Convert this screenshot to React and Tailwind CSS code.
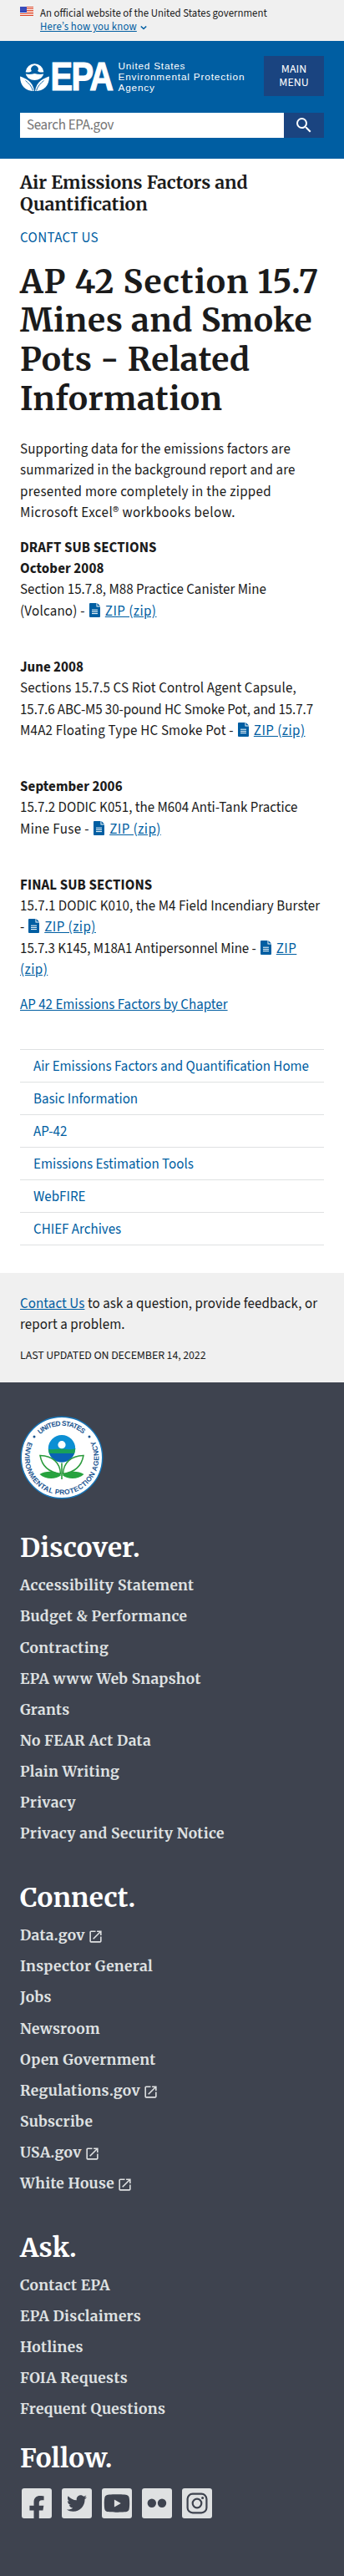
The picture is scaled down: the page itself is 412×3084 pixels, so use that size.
import React from 'react';
import { FaTwitter, FaYoutube, FaFacebookF } from 'react-icons/fa';
import { MdLaunch, MdSearch } from 'react-icons/md';

const stripes = [0, 2, 4, 6, 8, 10];

function Flag() {
  return (
    <svg className="mt-2 h-[11px] w-4 shrink-0" viewBox="0 0 16 11">
      <rect width="16" height="11" fill="#fff" />
      {stripes.map((y) => <rect key={y} y={y} width="16" height="1" fill="#db3e1f" />)}
      <rect width="8" height="7" fill="#1e33b1" />
      {[1, 3, 5].map((y) => [1, 3, 5, 7].map((x) => <circle key={`${x}-${y}`} cx={x} cy={y} r="0.45" fill="#fff" />))}
    </svg>
  );
}

function EpaLogo() {
  return (
    <svg className="mt-[5px] h-[40px] w-[270px] shrink-0 overflow-visible" viewBox="24 71 270 40" fill="#fff">
      <path d="M30.6 85.2a11 11.6 0 0 1 21.800 0c-3 .9-5.500 .3-7.300-1.200a4.300 4.300 0 1 0-7.200 0c-1.800 1.500-4.300 2.100-7.300 1.200z" />
      <circle cx="41.500" cy="81" r="2" fill="#005ea2" />
      <path d="M30.800 87.500c4 .8 7 .4 10.700-.6 3.700 1 6.700 1.400 10.700.6-1.300 4.600-5.500 7.500-10.700 7.500s-9.400-2.900-10.700-7.500z" />
      <path d="M24 90.500C30 92.500 39.500 96 41 108c-10.500 0-17-6-17-17.500z" />
      <path d="M59 90.500C53 92.500 43.500 96 42 108c10.500 0 17-6 17-17.500z" />
      <path d="M30.500 95.500c4 3 7.500 7 9 12M52.500 95.500c-4 3-7.500 7-9 12" fill="none" stroke="#005ea2" strokeWidth="0.900" />
      <g transform="translate(60.500 107.400) scale(0.830 1)">
        <text className="font-['Liberation_Sans',sans-serif] text-[48px] font-bold tracking-[-2px]" stroke="#fff" strokeWidth="1.200">EPA</text>
      </g>
      <g className="font-['Liberation_Sans',sans-serif] text-[11.8px]">
        <text x="141.500" y="82.200" textLength="80">United States</text>
        <text x="141.500" y="95" textLength="151">Environmental Protection</text>
        <text x="141.500" y="107.800" textLength="43.500">Agency</text>
      </g>
    </svg>
  );
}

function Seal() {
  return (
    <svg className="h-[100px] w-[100px]" viewBox="0 0 100 100">
      <defs>
        <path id="seal-top" d="M24.080 22.170A38 38 0 0 1 75.920 22.170" />
        <path id="seal-bottom" d="M9.900 31.200A44.300 44.300 0 1 0 90.100 31.200" />
        <clipPath id="seal-ball"><circle cx="50" cy="39.200" r="16.200" /></clipPath>
      </defs>
      <circle cx="50" cy="50" r="48.700" fill="#fff" stroke="#1675b8" strokeWidth="1.400" />
      <g className="font-['Liberation_Sans',sans-serif] text-[8.4px] font-bold" fill="#1b5591">
        <text><textPath href="#seal-top" textLength="56">UNITED STATES</textPath></text>
        <text><textPath href="#seal-bottom" textLength="179">ENVIRONMENTAL PROTECTION AGENCY</textPath></text>
      </g>
      <circle cx="17" cy="25" r="1.500" fill="#1b5591" />
      <circle cx="83" cy="25" r="1.500" fill="#1b5591" />
      <g clipPath="url(#seal-ball)">
        <rect x="33" y="22" width="34" height="34" fill="#0c8fd3" />
        <path d="M33 40c6 1 10-1 17-.5s11 1.500 17-.5v7H33z" fill="#19a05a" />
        <rect x="33" y="45" width="34" height="12" fill="#0a63b4" />
      </g>
      <circle cx="50" cy="34.700" r="4.600" fill="#fff" />
      <path d="M50 56.500V76" stroke="#2a9b3c" strokeWidth="1.600" />
      <path d="M48.500 69.500C48 56 39 48 24 47.500c2 11 9 20 24.500 22zM51.500 69.500C52 56 61 48 76 47.500c-2 11-9 20-24.500 22z" fill="#fff" stroke="#2a9b3c" strokeWidth="1.500" />
      <path d="M23.500 70c8-5 19-4 26 1-7 5.500-19 5.500-26-1zM76.500 70c-8-5-19-4-26 1 7 5.500 19 5.500 26-1z" fill="#27a23e" />
    </svg>
  );
}

function ZipLink({ wrap }) {
  return (
    <>
      <svg className="ml-[1.6px] mr-[6px] inline-block h-[17px] w-[13px] align-[-2px]" viewBox="0 0 13 17">
        <path d="M1 0h7.500v4.500H13V16a1 1 0 0 1-1 1H1a1 1 0 0 1-1-1V1a1 1 0 0 1 1-1zM9.400 0 13 3.600H9.400z" fill="#005ea2" />
        <path d="M3 8.200h7M3 10.400h7M3 12.600h7" stroke="#fff" strokeWidth="1" />
      </svg>
      <a className="tracking-[0.45px] text-[#005ea2] underline">{wrap ? <>ZIP<br />(zip)</> : 'ZIP (zip)'}</a>
    </>
  );
}

const nav = ['Air Emissions Factors and Quantification Home', 'Basic Information', 'AP-42', 'Emissions Estimation Tools', 'WebFIRE', 'CHIEF Archives'];

const discover = ['Accessibility Statement', 'Budget & Performance', 'Contracting', 'EPA www Web Snapshot', 'Grants', 'No FEAR Act Data', 'Plain Writing', 'Privacy', 'Privacy and Security Notice'];
const connect = ['Data.gov', 'Inspector General', 'Jobs', 'Newsroom', 'Open Government', 'Regulations.gov', 'Subscribe', 'USA.gov', 'White House'];
const ask = ['Contact EPA', 'EPA Disclaimers', 'Hotlines', 'FOIA Requests', 'Frequent Questions'];
const external = ['Data.gov', 'Regulations.gov', 'USA.gov', 'White House'];

function FooterMenu({ title, items }) {
  return (
    <section>
      <h2 className="text-[31.5px] leading-[40px] tracking-[0.2px] text-white">{title}</h2>
      <ul className="mt-[7px]">
        {items.map((item) => (
          <li key={item} className="flex h-[37.1px] items-center text-[17.4px] leading-[22px] tracking-[0.34px]">
            <a>{item}</a>
            {external.includes(item) && <MdLaunch className="ml-[3px] mt-[3px] h-[19px] w-[19px]" />}
          </li>
        ))}
      </ul>
    </section>
  );
}

function Tile({ children }) {
  return <span className="flex h-9 w-9 items-center justify-center overflow-hidden rounded-[3px] bg-[#dfe1e2] text-[#3e434f]">{children}</span>;
}

export default function App() {
  return (
    <div className="h-[3084px] w-[412px] overflow-hidden whitespace-nowrap bg-white font-['Source_Sans_3','Noto_Sans_CJK_JP',sans-serif] text-[16.96px] leading-[25.44px] text-[#1b1b1b]">
      <div className="flex h-[49px] gap-2 bg-[#f0f0f0] pl-6">
        <Flag />
        <div className="pt-[8px] text-[12.8px] leading-4">
          <p>An official website of the United States government</p>
          <p className="flex items-center text-[#005ea2]">
            <a className="tracking-[0.13px] underline">Here’s how you know</a>
            <svg className="ml-1 mt-[2px] h-2 w-2" viewBox="0 0 8 8" fill="none" stroke="#005ea2" strokeWidth="1.600"><path d="M.8 2.500 4 5.500l3.200-3" /></svg>
          </p>
        </div>
      </div>

      <header className="h-[141px] bg-[#005ea2] px-6 pt-[18px]">
        <div className="flex justify-between">
          <EpaLogo />
          <button className="h-[48px] w-[72px] bg-[#1a4480] text-center text-[13.9px] leading-4 text-white">MAIN<br />MENU</button>
        </div>
        <div className="mt-5 flex h-[30px]">
          <div className="flex w-[316px] items-center bg-white pl-2 pt-[2px] tracking-[-0.3px] text-[#757575]">Search EPA.gov</div>
          <button className="flex w-12 items-center justify-center bg-[#1a4480] text-white"><MdSearch className="h-6 w-6" /></button>
        </div>
      </header>

      <main className="px-6 pt-4">
        <h2 className="font-['Merriweather','DejaVu_Serif_Condensed',serif] text-[21.28px] font-bold leading-[26.3px]">Air Emissions Factors and<br />Quantification</h2>
        <p className="mt-[14.6px]"><a className="tracking-[0.35px] text-[#005ea2]">CONTACT US</a></p>
        <h1 className="mt-4 font-['Merriweather','DejaVu_Serif_Condensed',serif] text-[39.04px] font-bold leading-[46.8px] tracking-[0.5px]"><span className="tracking-[0.9px]">AP 42 Section 15.7</span><br />Mines and Smoke<br />Pots - Related<br />Information</h1>
        <div className="mt-6 flex flex-col">
          <p>
            <span className="tracking-[0.17px]">Supporting data for the emissions factors are</span><br />
            <span className="tracking-[0.13px]">summarized in the background report and are</span><br />
            <span className="tracking-[0.3px]">presented more completely in the zipped</span><br />
            <span className="tracking-[0.4px]">Microsoft Excel® workbooks below.</span>
          </p>
          <p className="mt-4"><strong className="tracking-[0.1px]">DRAFT SUB SECTIONS<br />October 2008</strong><br />Section 15.7.8, M88 Practice Canister Mine<br /><span className="tracking-[0.2px]">(Volcano) - </span><ZipLink /></p>
          <p className="mt-[41.4px]">
            <strong>June 2008</strong><br />
            <span className="tracking-[0.14px]">Sections 15.7.5 CS Riot Control Agent Capsule,</span><br />
            <span className="tracking-[-0.1px]">15.7.6 ABC-M5 30-pound HC Smoke Pot, and 15.7.7</span><br />
            <span className="tracking-[0.2px]">M4A2 Floating Type HC Smoke Pot - </span><ZipLink />
          </p>
          <p className="mt-[41.4px]"><strong className="tracking-[0.1px]">September 2006</strong><br />15.7.2 DODIC K051, the M604 Anti-Tank Practice<br /><span className="tracking-[0.35px]">Mine Fuse - </span><ZipLink /></p>
          <p className="mt-[41.4px]"><strong className="tracking-[0.1px]">FINAL SUB SECTIONS</strong><br /><span className="tracking-[0.05px]">15.7.1 DODIC K010, the M4 Field Incendiary Burster</span><br />- <ZipLink /><br /><span className="tracking-[-0.03px]">15.7.3 K145, M18A1 Antipersonnel Mine - </span><ZipLink wrap /></p>
          <p className="mt-4"><a className="text-[#005ea2] underline">AP 42 Emissions Factors by Chapter</a></p>
        </div>
        <nav className="mt-10 border-b border-[#dfe1e2]">
          {nav.map((item) => (
            <a key={item} className="block border-t border-[#dfe1e2] px-4 pb-[7.5px] pt-[8.5px] leading-[22.05px] text-[#005ea2]">{item}</a>
          ))}
        </nav>
      </main>

      <section className="mt-[32.4px] h-[131px] bg-[#f0f0f0] px-6 pt-[25px]">
        <p className="tracking-[0.08px]"><a className="text-[#005ea2] underline">Contact Us</a> to ask a question, provide feedback, or<br />report a problem.</p>
        <p className="mt-[13px] text-[13.92px] leading-[20.9px] tracking-[-0.11px]">LAST UPDATED ON DECEMBER 14, 2022</p>
      </section>

      <footer className="flex h-[1429px] flex-col bg-[#3e434f] px-6 pt-10 font-['Merriweather','DejaVu_Serif_Condensed',serif] font-bold text-[#dfe1e2]">
        <Seal />
        <div className="mt-[38px] flex flex-col gap-[38px]">
          <FooterMenu title="Discover." items={discover} />
          <FooterMenu title="Connect." items={connect} />
          <FooterMenu title="Ask." items={ask} />
        </div>
        <h2 className="mt-[20px] text-[31.5px] leading-[40px] tracking-[0.2px] text-white">Follow.</h2>
        <div className="ml-[2px] mt-[16px] flex gap-3">
          <Tile><FaFacebookF className="mt-[13px] h-[31px] w-[20px]" preserveAspectRatio="none" /></Tile>
          <Tile><FaTwitter className="h-6 w-6" /></Tile>
          <Tile><FaYoutube className="h-8 w-8" /></Tile>
          <Tile>
            <svg className="h-9 w-9" viewBox="0 0 36 36" fill="currentColor"><circle cx="11.800" cy="17.700" r="5.200" /><circle cx="24" cy="17.700" r="5.200" /></svg>
          </Tile>
          <Tile>
            <svg className="h-9 w-9" viewBox="0 0 36 36" fill="none" stroke="currentColor" strokeWidth="2.200"><rect x="6.600" y="6.600" width="22.800" height="22.800" rx="6.200" /><circle cx="18" cy="18" r="5.300" /><circle cx="24.600" cy="11.400" r="1.500" fill="currentColor" stroke="none" /></svg>
          </Tile>
        </div>
      </footer>
    </div>
  );
}
